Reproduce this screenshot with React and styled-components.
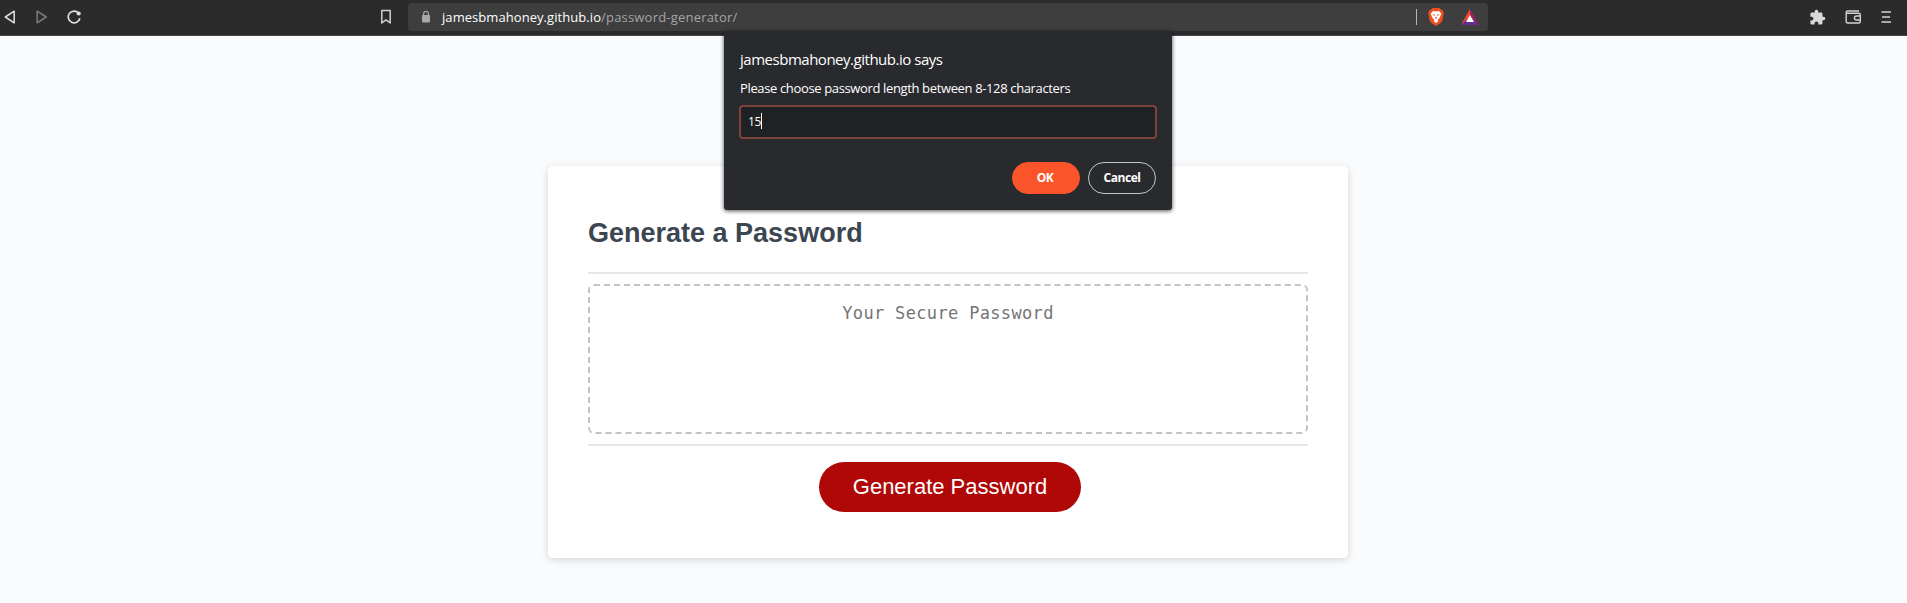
import React from "react";
import styled, { createGlobalStyle } from "styled-components";

const GlobalStyle = createGlobalStyle`
  * { box-sizing: border-box; }
  html, body { margin: 0; height: 100%; overflow: hidden; background: #f9fbfd; }
`;

const ui = `"Segoe UI", "Open Sans", "Noto Sans", sans-serif`;

const Browser = styled.div`
  display: flex;
  flex-direction: column;
  width: 1907px;
  height: 603px;
  position: relative;
  overflow: hidden;
  background: #f9fbfd;
`;

const Toolbar = styled.header`
  display: flex;
  flex: none;
  height: 36px;
  padding: 3px 15px 0 3px;
  background: #2b2b2b;
  border-bottom: 1px solid #48484a;
`;

const IconGroup = styled.div`
  display: flex;
  align-items: center;
  height: 28px;
  gap: ${(p) => p.$gap || 0}px;
  margin-left: ${(p) => (p.$end ? "auto" : "0")};
  svg { display: block; flex: none; }
`;

const BookmarkSlot = styled.div`
  display: flex;
  align-items: center;
  height: 28px;
  margin: 0 16px 0 298px;
`;

const AddressBar = styled.div`
  display: flex;
  align-items: center;
  width: 1080px;
  height: 28px;
  padding: 0 9px 0 13px;
  border-radius: 4px;
  background: #3e3e3e;
`;

const Address = styled.div`
  margin-left: 11px;
  font: 13px/20px ${ui};
  white-space: nowrap;
`;

const Host = styled.span`
  color: #fff;
  letter-spacing: 0.06px;
`;

const Path = styled.span`
  color: #a5a5a5;
  letter-spacing: 0.2px;
`;

const Divider = styled.span`
  width: 1px;
  height: 16px;
  background: #b4b4b4;
`;

const Page = styled.main`
  flex: 1;
  padding: 130px 0 0 548px;
`;

const Card = styled.section`
  display: flex;
  flex-direction: column;
  width: 800px;
  height: 392px;
  padding: 0 40px;
  border-radius: 5px;
  background: #fff;
  box-shadow: rgba(0, 0, 0, 0.15) 0 2px 8px;
`;

const CardTitle = styled.h2`
  margin: 0;
  height: 106px;
  padding-top: 49px;
  font: 700 27px/36px "Liberation Sans", Arial, sans-serif;
  color: #3b4650;
`;

const Rule = styled.div`
  height: 2px;
  flex: none;
  background: #e5e7ea;
`;

const PasswordField = styled.textarea`
  display: block;
  width: 720px;
  height: 150px;
  margin: 10px 0;
  padding: 16px;
  border: 2px dashed #c2c4c7;
  border-radius: 6px;
  background: #fff;
  font: 17px/22px "DejaVu Sans Mono", monospace;
  letter-spacing: 0.34px;
  text-align: center;
  resize: none;
  outline: none;
  overflow: hidden;
  &::placeholder { color: #757575; opacity: 1; }
`;

const GenerateButton = styled.button`
  width: 262px;
  height: 50px;
  margin: 16px 0 0 231px;
  padding: 0;
  border: 0;
  border-radius: 25px;
  background: #b00707;
  color: #fff;
  font: 22px/30px "Liberation Sans", Arial, sans-serif;
  white-space: nowrap;
`;

const Prompt = styled.div`
  position: absolute;
  top: 31px;
  left: 724px;
  width: 448px;
  height: 179px;
  padding: 16px 16px 0;
  border-radius: 0 0 3px 3px;
  background: #292a2e;
  box-shadow: 0 1px 4px rgba(0, 0, 0, 0.7);
  color: #fff;
  font-family: ${ui};
`;

const PromptTitle = styled.div`
  font-size: 15px;
  line-height: 24px;
  letter-spacing: -0.48px;
  white-space: nowrap;
`;

const PromptMessage = styled.div`
  margin-top: 8px;
  font-size: 13px;
  line-height: 18px;
  letter-spacing: -0.36px;
  white-space: nowrap;
`;

const PromptInput = styled.div`
  display: flex;
  align-items: center;
  width: 418px;
  height: 34px;
  margin: 8px 0 0 -1px;
  padding: 0 0 2px 7px;
  border: 2px solid #7c4439;
  border-radius: 4px;
  background: #202124;
  font-size: 12px;
  letter-spacing: -0.3px;
`;

const Caret = styled.span`
  width: 1px;
  height: 16px;
  background: #fff;
`;

const PromptActions = styled.div`
  display: flex;
  justify-content: flex-end;
  gap: 8px;
  margin-top: 23px;
`;

const PromptButton = styled.button`
  width: 68px;
  height: 32px;
  padding: 0 ${(p) => (p.$primary ? 2 : 0)}px 1px 0;
  border: 1px solid ${(p) => (p.$primary ? "#fb542b" : "#c5c6ca")};
  border-radius: 16px;
  background: ${(p) => (p.$primary ? "#fb542b" : "transparent")};
  color: #fff;
  font: 700 12px/16px ${ui};
  letter-spacing: -0.45px;
`;

const BackIcon = ({ flip, color }) => (
  <svg width="13" height="16" viewBox="0 0 13 16" fill="none" stroke={color} strokeWidth="1.5" strokeLinejoin="round">
    <path d={flip ? "M2.2 2.2 L11.2 8 L2.2 13.8Z" : "M11.2 2.2 L2.3 8 L11.2 13.8Z"} />
  </svg>
);

const ReloadIcon = () => (
  <svg width="15" height="16" viewBox="0 0 15 16">
    <path d="M11.7 4.2A5.9 5.9 0 1 0 12.9 9.3" fill="none" stroke="#dedede" strokeWidth="1.7" />
    <circle cx="11.7" cy="4.5" r="2.1" fill="#dedede" />
  </svg>
);

const BookmarkIcon = () => (
  <svg width="12" height="16" viewBox="0 0 12 16" fill="none" stroke="#d2d2d2" strokeWidth="1.5" strokeLinejoin="round">
    <path d="M1.8 1.5H10.2V14L6 10.8L1.8 14Z" />
  </svg>
);

const LockIcon = () => (
  <svg width="10" height="14" viewBox="0 0 10 14">
    <rect x="1" y="5" width="8" height="7.5" rx="1" fill="#a8a8a8" />
    <path d="M2.6 5.5V3.7A2.4 2.4 0 0 1 7.4 3.7V5.5" fill="none" stroke="#a8a8a8" strokeWidth="1.2" />
  </svg>
);

const BraveIcon = () => (
  <svg width="16" height="18" viewBox="0 0 16 18">
    <path d="M4.5 0H11.5L13 1.7L14.5 2L15.8 5L14.4 12.5Q14 14 12.5 15L8 18L3.5 15Q2 14 1.6 12.5L.2 5L1.5 2L3 1.7Z" fill="#ee4f22" />
    <path d="M5 3L8 3.5L11 3L13.3 5.7L12 8.7L11.4 10.3L9.5 12L10.4 13L8 15L5.6 13L6.5 12L4.6 10.3L4 8.7L2.7 5.7Z" fill="#fff" />
    <path d="M4.5 6L7 6.8L6.4 8.2ZM11.5 6L9 6.8L9.6 8.2ZM7 10L8 11.3L9 10L8 8.5Z" fill="#ee4f22" />
  </svg>
);

const RewardsIcon = () => (
  <svg width="18" height="16" viewBox="0 0 18 16">
    <path d="M9 0L0 16L9 10.5Z" fill="#ff4724" />
    <path d="M9 0L18 16L9 8Z" fill="#9e1f63" />
    <path d="M0 16H18L12.5 10.5H5.5Z" fill="#662d91" />
    <path d="M9 6L13 13H5Z" fill="#fff" />
  </svg>
);

const PuzzleIcon = () => (
  <svg width="17" height="17" viewBox="0 0 24 24" fill="#d8d8d8">
    <path d="M20.5 11H19V7c0-1.1-.9-2-2-2h-4V3.5a2.5 2.5 0 0 0-5 0V5H4c-1.1 0-2 .9-2 2v3.8h1.5a2.7 2.7 0 0 1 0 5.4H2V20c0 1.1.9 2 2 2h3.8v-1.5a2.7 2.7 0 0 1 5.4 0V22H17c1.1 0 2-.9 2-2v-4h1.5a2.5 2.5 0 0 0 0-5z" />
  </svg>
);

const WalletIcon = () => (
  <svg width="17" height="16" viewBox="0 0 17 16" fill="none" stroke="#d2d2d2" strokeWidth="1.4" strokeLinejoin="round">
    <path d="M1.2 4V12.2Q1.2 14 3 14H13.8Q15.3 14 15.3 12.5V5.8Q15.3 4.3 13.8 4.3H2.7Q1.2 4.3 1.2 3.1Q1.2 2 2.7 2H14" />
    <path d="M15.5 7H11.5Q9.4 7 9.4 9Q9.4 11 11.5 11H15.5" />
  </svg>
);

const MenuIcon = () => (
  <svg width="11" height="14" viewBox="0 0 11 14" stroke="#d2d2d2" strokeWidth="1.6">
    <path d="M.5 2H10M1 7H9M.5 12H10" />
  </svg>
);

const Badges = styled(IconGroup)`
  margin-left: auto;
  svg:last-child { margin-left: 6px; }
`;

export default function App() {
  return (
    <Browser>
      <GlobalStyle />
      <Toolbar>
        <IconGroup $gap={19}>
          <BackIcon color="#dedede" />
          <BackIcon flip color="#7c7c7c" />
          <ReloadIcon />
        </IconGroup>
        <BookmarkSlot><BookmarkIcon /></BookmarkSlot>
        <AddressBar>
          <LockIcon />
          <Address>
            <Host>jamesbmahoney.github.io</Host>
            <Path>/password-generator/</Path>
          </Address>
          <Badges $gap={11}>
            <Divider />
            <BraveIcon />
            <RewardsIcon />
          </Badges>
        </AddressBar>
        <IconGroup $gap={19} $end>
          <PuzzleIcon />
          <WalletIcon />
          <MenuIcon />
        </IconGroup>
      </Toolbar>
      <Page>
        <Card>
          <CardTitle>Generate a Password</CardTitle>
          <Rule />
          <PasswordField readOnly placeholder="Your Secure Password" />
          <Rule />
          <GenerateButton>Generate Password</GenerateButton>
        </Card>
      </Page>
      <Prompt>
        <PromptTitle>jamesbmahoney.github.io says</PromptTitle>
        <PromptMessage>Please choose password length between 8-128 characters</PromptMessage>
        <PromptInput>15<Caret /></PromptInput>
        <PromptActions>
          <PromptButton $primary>OK</PromptButton>
          <PromptButton>Cancel</PromptButton>
        </PromptActions>
      </Prompt>
    </Browser>
  );
}
